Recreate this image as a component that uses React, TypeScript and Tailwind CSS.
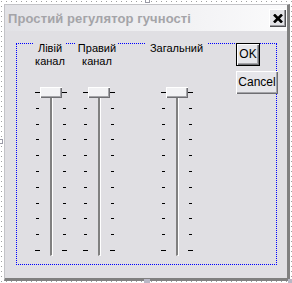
import React from 'react'

const TICKS = Array.from({ length: 11 }, (_, i) => i)

function TickColumn({ side }: { side: 'left' | 'right' }) {
  return (
    <div
      className={`mt-[5px] flex h-[159px] w-[5px] flex-col justify-between ${
        side === 'left' ? 'items-end' : 'items-start'
      }`}
    >
      {TICKS.map((i) => {
        const end = i === 0 || i === TICKS.length - 1
        return (
          <div
            key={i}
            className={`h-px bg-black ${end ? 'w-[5px]' : side === 'left' ? 'mr-[1px] w-[3px]' : 'ml-[1px] w-[3px]'}`}
          />
        )
      })}
    </div>
  )
}

function Slider() {
  return (
    <div className="flex items-start">
      <TickColumn side="left" />
      <div className="flex w-[22px] flex-col">
        {/* thumb */}
        <div className="h-[11px] w-[22px] bg-[#f2f2f4] shadow-[inset_1px_1px_#ffffff,inset_-1px_-1px_#6e6e72,inset_-2px_-2px_#a4a4a8]" />
        {/* track */}
        <div className="ml-[10px] h-[158px] w-[3px] border-l-2 border-r border-b border-l-[#808080] border-r-white border-b-white" />
      </div>
      <TickColumn side="right" />
    </div>
  )
}

export default function App() {
  return (
    <div className="relative h-[283px] w-[292px] overflow-hidden bg-white bg-[radial-gradient(#a0a0a0_0.7px,transparent_0.9px)] bg-[size:5px_5px] bg-[position:-1px_-1px] pl-[4px] pt-[4px] font-['Liberation_Sans',Arial,sans-serif]">
      {/* designer handles */}
      <div className="absolute left-[145px] top-[-2px] h-[5px] w-[5px] border border-[#9a9aa6] bg-white" />
      <div className="absolute left-[-2px] top-[139px] h-[5px] w-[5px] border border-[#9a9aa6] bg-white" />
      <div className="absolute left-[144px] top-[279px] h-[5px] w-[6px] bg-[#b8b8c6]" />
      <div className="absolute left-[288px] top-[279px] h-[5px] w-[5px] bg-[#b8b8c6]" />

      {/* window */}
      <div className="flex h-[277px] w-[286px] flex-col border-l border-t border-[#c4c4c8] border-r-[3px] border-b-[3px] border-r-[#808080] border-b-[#808080] bg-[#e0dfe3]">
        {/* title bar */}
        <div className="flex h-[26px] items-center justify-between bg-gradient-to-r from-[#e2e2e6] to-[#fbfbfc] pl-[3px] pr-[1px]">
          <span className="text-[13px] font-bold leading-none tracking-[0.1px] text-[#a4a4a8]">Простий регулятор гучності</span>
          <div className="flex h-[18px] w-[17px] items-center justify-center bg-[#e4e4e8] shadow-[inset_1px_1px_#ffffff,inset_-1px_-1px_#505054,inset_-2px_-2px_#9c9ca0]">
            <svg width="10" height="9" viewBox="0 0 10 9">
              <path d="M1 0.5 L9 8.5 M9 0.5 L1 8.5" stroke="#000" strokeWidth="2.6" />
            </svg>
          </div>
        </div>

        {/* client area */}
        <div className="relative flex-1 pl-[11px] pt-[12px] text-[11px] leading-[13px] text-black">
          {/* group box */}
          <div className="relative h-[222px] w-[261px] border border-dotted border-[#0000ff] pl-[18px] pt-[43px]">
            <div className="absolute left-[17px] top-[-2px] w-[32px] bg-[#e0dfe3] text-center">
              Лівій
              <br />
              канал
            </div>
            <div className="absolute left-[59px] top-[-2px] w-[42px] bg-[#e0dfe3] text-center">
              Правий
              <br />
              канал
            </div>
            <div className="absolute left-[128px] top-[-2px] w-[63px] bg-[#e0dfe3] text-center">Загальний</div>

            <div className="flex">
              <Slider />
              <div className="ml-[16px]">
                <Slider />
              </div>
              <div className="ml-[46px]">
                <Slider />
              </div>
            </div>
          </div>

          {/* buttons */}
          <div className="absolute left-[231px] top-[12px] flex flex-col gap-[5px]">
            <div className="flex h-[23px] w-[24px] items-center justify-center border border-black bg-[#e6e6ea] text-[12px] shadow-[inset_1px_1px_#ffffff,inset_-1px_-1px_#6e6e72,inset_-2px_-2px_#a4a4a8]">
              OK
            </div>
            <div className="flex h-[23px] w-[42px] items-center justify-center bg-[#e6e6ea] text-[12px] shadow-[inset_1px_1px_#ffffff,inset_-1px_-1px_#6e6e72,inset_-2px_-2px_#a4a4a8]">
              Cancel
            </div>
          </div>
        </div>
      </div>
    </div>
  )
}
